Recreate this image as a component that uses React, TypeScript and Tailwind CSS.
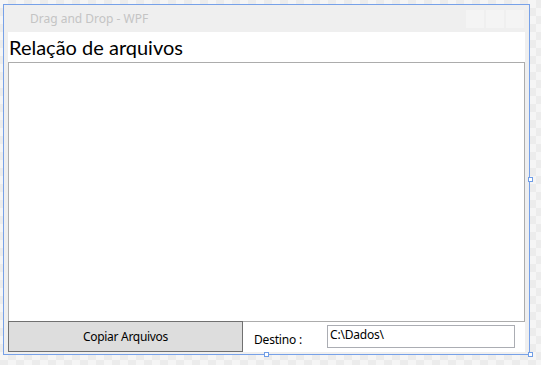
const font = { fontFamily: '"Noto Sans", "Open Sans", sans-serif' };

function Handle({ className }: { className: string }) {
  return <div className={`absolute w-[5px] h-[5px] border border-[#6f9de6] bg-white ${className}`} />;
}

export default function App() {
  return (
    <div className="w-[552px] h-[365px] bg-white relative overflow-hidden" style={font}>
      <div className="absolute left-0 top-0 w-[541px] h-[365px] bg-[#f3f3f3] bg-[conic-gradient(#ececec_25%,#f5f5f5_0_50%,#ececec_0_75%,#f5f5f5_0)] bg-[length:16px_16px]" />

      <div className="absolute left-[3px] top-[4px] w-[527px] h-[351px] border border-[#77a1e8] bg-[#efefef] flex flex-col px-[4px] pb-[2px]">
        <div className="h-[27px] shrink-0 flex items-center">
          <span className="ml-[22px] text-[12px] text-[#c4c4c4] leading-none">Drag and Drop - WPF</span>
          <div className="ml-auto flex gap-[2px] mr-[1px]">
            <div className="w-[18px] h-[18px] bg-[#f4f4f4]" />
            <div className="w-[18px] h-[18px] bg-[#f4f4f4]" />
            <div className="w-[18px] h-[18px] bg-[#f4f4f4]" />
          </div>
        </div>

        <div className="flex-1 bg-white flex flex-col">
          <div className="h-[30px] shrink-0 flex items-center pl-[1px] text-[20px] text-black leading-none font-['Lato',sans-serif]">
            Relação de arquivos
          </div>
          <div className="flex-1 border border-[#acacac]" />
          <div className="h-[31px] shrink-0 flex items-stretch -mt-px">
            <div className="w-[235px] bg-[#dddddd] border border-[#707070] flex items-center justify-center text-[12px] text-black tracking-[-0.3px]">
              Copiar Arquivos
            </div>
            <div className="flex items-center pl-[11px] pt-[6px] text-[12px] text-black w-[84px] tracking-[-0.2px]">Destino :</div>
            <div className="flex items-center">
              <div className="w-[188px] h-[23px] border border-[#abadb3] text-[12px] text-black px-[2px] leading-[16px] pt-[1px] tracking-[-0.2px]">
                C:\Dados\
              </div>
            </div>
          </div>
        </div>
      </div>

      <Handle className="left-[264px] top-[352px]" />
      <Handle className="left-[528px] top-[177px]" />
      <Handle className="left-[528px] top-[352px]" />
    </div>
  );
}
